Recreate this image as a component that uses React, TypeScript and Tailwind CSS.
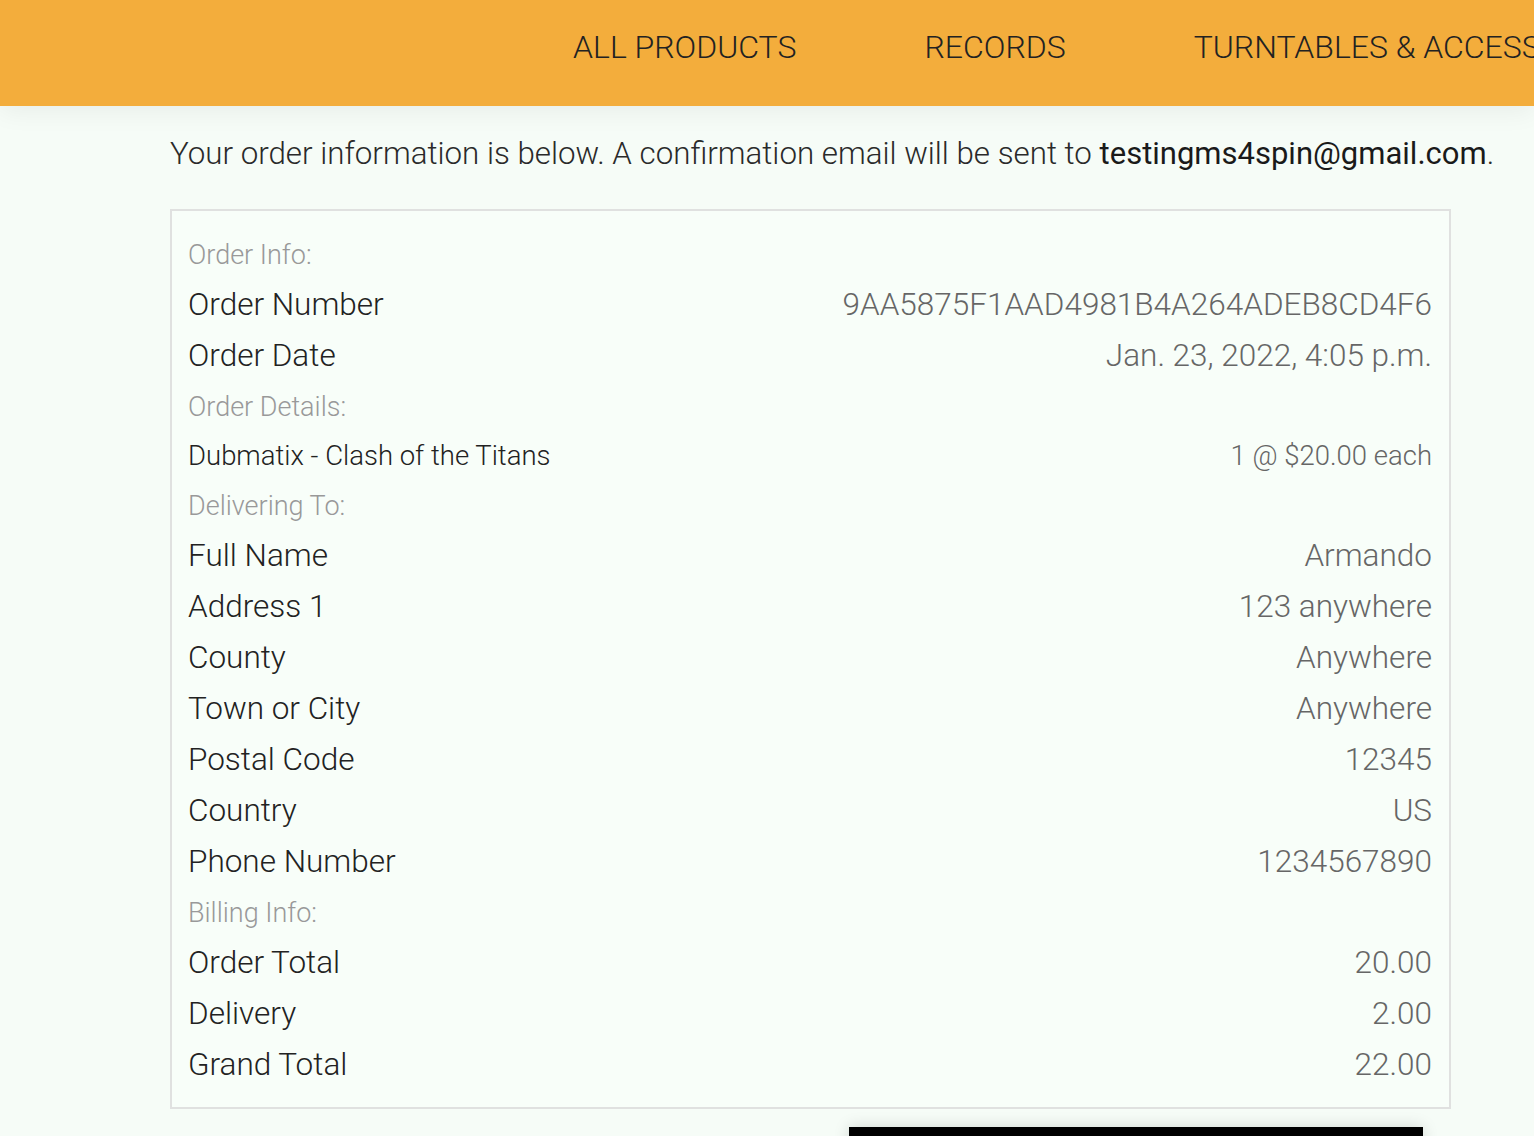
import React from 'react';

type Row = { kind: 'head'; label: string } | { kind: 'row'; label: string; value: string; small?: boolean };

const rows: Row[] = [
    { kind: 'head', label: 'Order Info:' },
    { kind: 'row', label: 'Order Number', value: '9AA5875F1AAD4981B4A264ADEB8CD4F6' },
    { kind: 'row', label: 'Order Date', value: 'Jan. 23, 2022, 4:05 p.m.' },
    { kind: 'head', label: 'Order Details:' },
    { kind: 'row', label: 'Dubmatix - Clash of the Titans', value: '1 @ $20.00 each', small: true },
    { kind: 'head', label: 'Delivering To:' },
    { kind: 'row', label: 'Full Name', value: 'Armando' },
    { kind: 'row', label: 'Address 1', value: '123 anywhere' },
    { kind: 'row', label: 'County', value: 'Anywhere' },
    { kind: 'row', label: 'Town or City', value: 'Anywhere' },
    { kind: 'row', label: 'Postal Code', value: '12345' },
    { kind: 'row', label: 'Country', value: 'US' },
    { kind: 'row', label: 'Phone Number', value: '1234567890' },
    { kind: 'head', label: 'Billing Info:' },
    { kind: 'row', label: 'Order Total', value: '20.00' },
    { kind: 'row', label: 'Delivery', value: '2.00' },
    { kind: 'row', label: 'Grand Total', value: '22.00' },
];

const navItems = ['ALL PRODUCTS', 'RECORDS', 'TURNTABLES & ACCESSORIES'];

export default function App() {
    return (
        <div className="h-[1136px] overflow-hidden bg-[#f6fcf7] font-['Roboto_Light','Roboto',sans-serif] font-light text-[#111]">
            <header className="relative z-10 flex h-[106px] overflow-hidden bg-[#f3ad3c] shadow-[0_6px_24px_rgba(0,0,0,0.06)]">
                <nav className="flex whitespace-nowrap pl-[573px] pt-[27px] text-[32px] leading-[40px] text-[#222]">
                    {navItems.map((item) => (
                        <span key={item} className="mr-[128px]">{item}</span>
                    ))}
                </nav>
            </header>

            <main className="pl-[170px] pr-[83px]">
                <p className="pt-[29px] text-[31.3px] leading-[38px] text-[#2a2a2a] whitespace-nowrap">
                    Your order information is below. A confirmation email will be sent to{' '}
                    <span className="text-[31px] font-['Roboto',sans-serif] font-normal text-[#1a1a1a]">testingms4spin@gmail.com</span>.
                </p>

                <div className="mt-[36px] w-[1281px] border-2 border-[#e0e1e0] bg-[#f8fef9] px-[16px] pt-[17px] pb-[18px]">
                    {rows.map((r, i) =>
                        r.kind === 'head' ? (
                            <div key={i} className="flex h-[50px] items-center pt-[4px] text-[27px] text-[#999]">
                                {r.label}
                            </div>
                        ) : (
                            <div
                                key={i}
                                className={`flex items-center justify-between pr-[1px] pt-[2px] ${r.small ? 'h-[49px] text-[27.5px]' : 'h-[51px] text-[31.5px]'}`}
                            >
                                <span className="text-[#222]">{r.label}</span>
                                <span className="text-[#666]">{r.value}</span>
                            </div>
                        )
                    )}
                </div>

                <div className="ml-[679px] mt-[18px] h-[40px] w-[574px] bg-black shadow-[0_0_16px_rgba(0,0,0,0.15)]" />
            </main>
        </div>
    );
}
